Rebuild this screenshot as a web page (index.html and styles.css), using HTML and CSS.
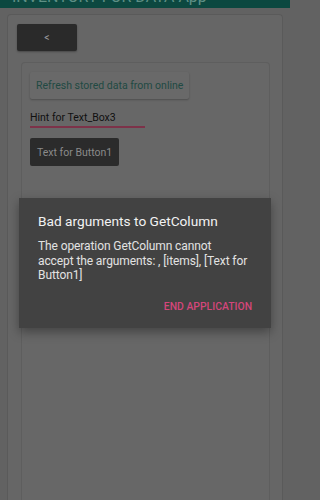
FILE: index.html
```html
<!DOCTYPE html>
<html>
<head>
<meta charset="utf-8">
<link rel="stylesheet" href="styles.css">
</head>
<body>
<div class="topbar"><div class="topbar-title">INVENTORY FOR DATA App</div></div>
<div class="outer">
  <div class="back-btn">&lt;</div>
  <div class="inner">
    <div class="refresh-btn">Refresh stored data from online</div>
    <div class="textbox">Hint for Text_Box3</div>
    <div class="btn1">Text for Button1</div>
  </div>
</div>
<div class="dialog">
  <div class="dialog-title">Bad arguments to GetColumn</div>
  <div class="dialog-body">The operation GetColumn cannot<br>accept the arguments: , [items], [Text for<br>Button1]</div>
  <div class="dialog-actions"><span class="dialog-btn">END APPLICATION</span></div>
</div>
</body>
</html>
```

FILE: styles.css
```css
html, body {
  margin: 0;
  padding: 0;
  width: 290px;
  height: 500px;
  overflow: hidden;
}
body {
  background: #626262;
  font-family: Roboto, "Noto Sans", sans-serif;
  position: relative;
  display: flex;
  flex-direction: column;
}
.topbar {
  height: 8px;
  flex: none;
  background: #0c4840;
  overflow: hidden;
  padding-left: 12px;
}
.topbar-title {
  margin-top: -11px;
  font-size: 16px;
  line-height: 16px;
  color: #5e8f84;
  white-space: nowrap;
}
.outer {
  flex: 1;
  margin: 6px 7px 0 7px;
  border: 1px solid #5a5a5a;
  border-bottom: none;
  border-radius: 4px 4px 0 0;
  background: #666666;
  padding: 9px 8px 0 9px;
  display: flex;
  flex-direction: column;
  min-height: 0;
}
.back-btn {
  flex: none;
  width: 60px;
  height: 27px;
  background: #2a2a2a;
  border-radius: 2px;
  color: #9a9a9a;
  font-size: 10.5px;
  display: flex;
  align-items: center;
  justify-content: center;
  box-shadow: 0 1px 2px rgba(0,0,0,0.3);
}
.inner {
  flex: 1;
  margin: 11px 4px 0 4px;
  border: 1px solid #5e5e5e;
  border-bottom: none;
  border-radius: 4px 4px 0 0;
  background: #676767;
  padding: 9px 8px 0 8px;
  display: flex;
  flex-direction: column;
  align-items: flex-start;
}
.refresh-btn {
  display: flex;
  align-items: center;
  height: 27px;
  padding: 0 6px;
  background: #696969;
  border-radius: 2px;
  box-shadow: 0 1px 2px rgba(0,0,0,0.25);
  color: #214a43;
  font-size: 10.5px;
}
.textbox {
  width: 115px;
  margin-top: 12px;
  height: 15px;
  font-size: 10.5px;
  line-height: 14px;
  color: #101010;
  border-bottom: 2px solid #7d3249;
}
.btn1 {
  display: flex;
  align-items: center;
  height: 28px;
  margin-top: 10px;
  padding: 0 7px;
  background: #2b2b2b;
  border-radius: 2px;
  color: #8a8a8a;
  font-size: 10.5px;
}
.dialog {
  position: absolute;
  left: 19px;
  top: 198px;
  width: 252px;
  height: 130px;
  box-sizing: border-box;
  background: #424242;
  box-shadow: 0 4px 10px rgba(0,0,0,0.35);
  padding: 13px 8px 0 19px;
}
.dialog-title {
  font-size: 13.7px;
  line-height: 20px;
  color: #f2f2f2;
}
.dialog-body {
  margin-top: 8px;
  font-size: 12px;
  letter-spacing: -0.1px;
  line-height: 14.5px;
  color: #e2e2e2;
  white-space: nowrap;
}
.dialog-actions {
  display: flex;
  justify-content: flex-end;
  margin-top: 17px;
  padding-right: 11px;
}
.dialog-btn {
  font-size: 10.4px;
  font-weight: 500;
  color: #d4467a;
  line-height: 14px;
}
```
